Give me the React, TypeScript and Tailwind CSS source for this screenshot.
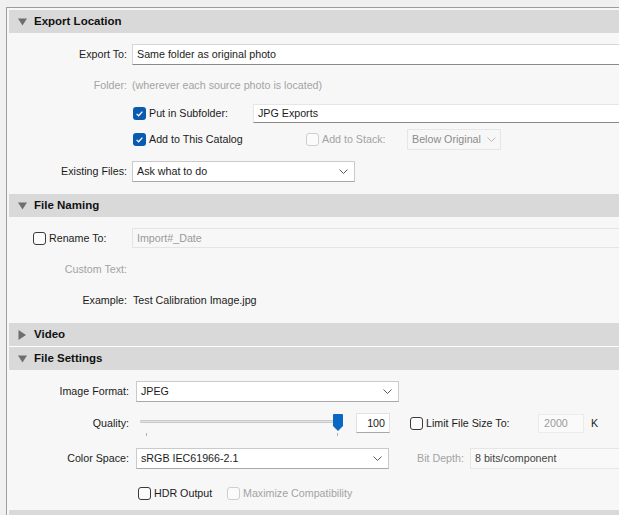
import React from 'react';

function Triangle({ open }: { open: boolean }) {
  return open ? (
    <svg width="9" height="8" viewBox="0 0 9 8"><polygon points="0,0.5 9,0.5 4.5,7.5" fill="#6e6e6e" /></svg>
  ) : (
    <svg width="9" height="10" viewBox="0 0 9 10"><polygon points="0.5,0 8,5 0.5,10" fill="#6e6e6e" /></svg>
  );
}

function Header({ title, open = true, className = '' }: { title: string; open?: boolean; className?: string }) {
  return (
    <div className={`flex h-[23px] items-center bg-[#d9d9d9] ${className}`}>
      <span className="ml-[9px] flex w-[9px] justify-center">
        <Triangle open={open} />
      </span>
      <span className="ml-[7px] text-[11.5px] font-bold text-[#111]">{title}</span>
    </div>
  );
}

function Chevron({ light = false }: { light?: boolean }) {
  return (
    <svg width="9" height="5" viewBox="0 0 9 5">
      <polyline points="0.5,0.5 4.5,4.5 8.5,0.5" fill="none" stroke={light ? '#b9b9b9' : '#5a5a5a'} strokeWidth="1" />
    </svg>
  );
}

function Check({ checked = false, disabled = false }: { checked?: boolean; disabled?: boolean }) {
  if (checked) {
    return (
      <span className="flex h-[13px] w-[13px] shrink-0 items-center justify-center rounded-[3px] bg-[#0a5bb0]">
        <svg width="13" height="13" viewBox="0 0 13 13">
          <polyline points="3.6,6.9 5.6,8.8 9.4,4.6" fill="none" stroke="#fff" strokeWidth="1.3" />
        </svg>
      </span>
    );
  }
  return (
    <span
      className={`block h-[13px] w-[13px] shrink-0 rounded-[3px] border ${
        disabled ? 'border-[#cfcfcf] bg-[#fbfbfb]' : 'border-[#3a3a3a] bg-[#fbfbfb]'
      }`}
    />
  );
}

export default function App() {
  return (
    <div className="h-[515px] w-[619px] overflow-hidden bg-[#f0f0f0] font-['Liberation_Sans',Arial,sans-serif] text-[10.7px] text-[#1b1b1b]">
      <div className="ml-[6px] mt-[7px] h-[600px] w-[660px] border-l border-t border-[#9c9c9c] bg-[#f7f7f7] pl-[2px] pt-[2px]">
        {/* Export Location */}
        <Header title="Export Location" />

        <div className="mt-[11px] flex h-[21px] items-center">
          <div className="w-[118px] text-right">Export To:</div>
          <div className="ml-[5px] flex h-full flex-1 items-center border border-[#d6d6d6] border-b-[#8a8a8a] bg-white pl-[4px]">
            Same folder as original photo
          </div>
        </div>

        <div className="mt-[10px] flex h-[20px] items-center text-[#a3a3a3]">
          <div className="w-[118px] text-right">Folder:</div>
          <div className="ml-[5px]">(wherever each source photo is located)</div>
        </div>

        <div className="mt-[9px] flex h-[19px] items-center">
          <div className="w-[124px]" />
          <Check checked />
          <span className="w-[107px] pl-[3px]">Put in Subfolder:</span>
          <div className="flex h-full flex-1 items-center border border-[#e6e6e6] border-b-[#8a8a8a] bg-white pl-[4px]">
            JPG Exports
          </div>
        </div>

        <div className="mt-[6px] flex h-[21px] items-center">
          <div className="w-[124px]" />
          <Check checked />
          <span className="w-[160px] pl-[3px]">Add to This Catalog</span>
          <Check disabled />
          <span className="w-[88px] pl-[3px] text-[#a3a3a3]">Add to Stack:</span>
          <div className="flex h-full w-[94px] items-center justify-between border border-[#e6e6e6] px-[4px] text-[#8c8c8c]">
            <span>Below Original</span>
            <Chevron light />
          </div>
        </div>

        <div className="mt-[11px] flex h-[21px] items-center">
          <div className="w-[118px] text-right">Existing Files:</div>
          <div className="ml-[5px] flex h-full w-[223px] items-center justify-between border border-[#cacaca] border-b-[#a8a8a8] bg-white pl-[4px] pr-[6px]">
            <span>Ask what to do</span>
            <Chevron />
          </div>
        </div>

        {/* File Naming */}
        <Header title="File Naming" className="mt-[12px]" />

        <div className="mt-[11px] flex h-[20px] items-center">
          <div className="w-[24px]" />
          <Check />
          <span className="w-[86px] pl-[3px]">Rename To:</span>
          <div className="flex h-full flex-1 items-center border border-[#e4e4e4] bg-[#f7f7f7] pl-[4px] text-[#9a9a9a]">
            Import#_Date
          </div>
        </div>

        <div className="mt-[11px] flex h-[20px] items-center text-[#a3a3a3]">
          <div className="w-[118px] text-right">Custom Text:</div>
        </div>

        <div className="mt-[11px] flex h-[20px] items-center">
          <div className="w-[118px] text-right">Example:</div>
          <div className="ml-[6px]">Test Calibration Image.jpg</div>
        </div>

        {/* Video / File Settings */}
        <Header title="Video" open={false} className="mt-[13px]" />
        <Header title="File Settings" className="h-[24px] border-t border-white" />

        <div className="mt-[11px] flex h-[21px] items-center">
          <div className="w-[120px] text-right">Image Format:</div>
          <div className="ml-[7px] flex h-full w-[263px] items-center justify-between border border-[#cacaca] border-b-[#a8a8a8] bg-white pl-[4px] pr-[6px]">
            <span>JPEG</span>
            <Chevron />
          </div>
        </div>

        <div className="mt-[11px] flex h-[20px] items-center">
          <div className="w-[120px] text-right">Quality:</div>
          <div className="relative ml-[7px] h-full w-[206px]">
            <div className="absolute left-[4px] right-0 top-[7px] h-[3px] rounded-[1px] border border-[#c9c9c9] bg-[#e3e3e3]" />
            <div className="absolute left-[10px] top-[20px] h-[3px] w-px bg-[#b0b0b0]" />
            <div className="absolute left-[201px] top-[20px] h-[3px] w-px bg-[#b0b0b0]" />
            <svg className="absolute left-[197px] top-[1px]" width="10" height="17" viewBox="0 0 10 17">
              <path d="M1 0 H9 Q10 0 10 1 V12 L5 17 L0 12 V1 Q0 0 1 0 Z" fill="#0a67c2" />
            </svg>
          </div>
          <div className="ml-[14px] flex h-full w-[34px] items-center justify-end border border-[#e2e2e2] border-b-[#a8a8a8] bg-white pr-[4px]">
            100
          </div>
          <div className="ml-[20px]">
            <Check />
          </div>
          <span className="w-[115px] pl-[3px]">Limit File Size To:</span>
          <div className="flex h-[19px] w-[46px] items-center border border-[#ececec] bg-[#fafafa] pl-[5px] text-[#9a9a9a]">
            2000
          </div>
          <span className="ml-[7px]">K</span>
        </div>

        <div className="mt-[15px] flex h-[21px] items-center">
          <div className="w-[120px] text-right">Color Space:</div>
          <div className="ml-[7px] flex h-full w-[253px] items-center justify-between border border-[#cacaca] border-b-[#a8a8a8] bg-white pl-[4px] pr-[6px]">
            <span>sRGB IEC61966-2.1</span>
            <Chevron />
          </div>
          <span className="ml-[28px] w-[53px] text-[#a3a3a3]">Bit Depth:</span>
          <div className="flex h-full flex-1 items-center border border-[#e6e6e6] bg-[#f9f9f9] pl-[4px] text-[#444]">
            8 bits/component
          </div>
        </div>

        <div className="mt-[14px] flex h-[20px] items-center">
          <div className="w-[129px]" />
          <Check />
          <span className="w-[76px] pl-[3px]">HDR Output</span>
          <Check disabled />
          <span className="pl-[3px] text-[#a3a3a3]">Maximize Compatibility</span>
        </div>

        <div className="mt-[7px] h-[23px] bg-[#d9d9d9]" />
      </div>
    </div>
  );
}
